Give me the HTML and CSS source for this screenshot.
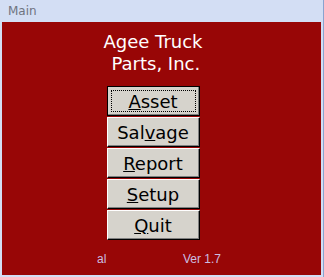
FILE: index.html
```html
<!DOCTYPE html>
<html lang="en">
<head>
    <meta charset="UTF-8">
    <title>Main</title>
    <link rel="stylesheet" href="styles.css">
</head>
<body>
    <div class="window">
        <div class="titlebar">Main</div>
        <div class="client">
            <h1 class="company">Agee Truck<br>&nbsp;Parts, Inc.</h1>
            <div class="menu">
                <button class="menu-btn focused"><u>A</u>sset</button>
                <button class="menu-btn">Sal<u>v</u>age</button>
                <button class="menu-btn"><u>R</u>eport</button>
                <button class="menu-btn"><u>S</u>etup</button>
                <button class="menu-btn"><u>Q</u>uit</button>
            </div>
            <div class="footer">
                <span class="user">al</span>
                <span class="version">Ver 1.7</span>
            </div>
        </div>
    </div>
</body>
</html>
```

FILE: styles.css
```css
body {
    margin: 0;
    background: #cfdcf3;
}
.window {
    width: 324px;
    height: 277px;
    box-sizing: border-box;
    padding: 0 2px 2px 2px;
    background: #d3def4;
    border-right: 1px solid #8aa3cf;
}
.titlebar {
    height: 22px;
    line-height: 22px;
    padding-left: 6px;
    font-family: "DejaVu Sans", sans-serif;
    font-size: 12px;
    color: #6f7480;
}
.client {
    height: 253px;
    background: #980606;
    display: flex;
    flex-direction: column;
    align-items: center;
    padding-right: 17px;
    box-sizing: border-box;
}
.company {
    margin: 9px 0 0 0;
    font-family: "DejaVu Sans", sans-serif;
    font-weight: normal;
    font-size: 18px;
    line-height: 22px;
    color: #ffffff;
    text-align: center;
}
.menu {
    display: flex;
    flex-direction: column;
    gap: 1px;
    margin-top: 11px;
}
.menu-btn {
    width: 93px;
    height: 30px;
    padding: 0;
    background: #d6d3cc;
    font-family: "DejaVu Sans", sans-serif;
    font-size: 18px;
    color: #000000;
    border: 1px solid;
    border-color: #ffffff #000000 #000000 #ffffff;
    box-shadow: inset -1px -1px 0 #808080;
}
.menu-btn.focused {
    border-color: #000000;
    outline: 1px dotted #000000;
    outline-offset: -5px;
}
.footer {
    display: flex;
    width: 124px;
    justify-content: space-between;
    margin-top: 12px;
    padding-left: 12px;
    font-family: "Liberation Sans", sans-serif;
    font-size: 12px;
    color: #cbbfe2;
}
```
